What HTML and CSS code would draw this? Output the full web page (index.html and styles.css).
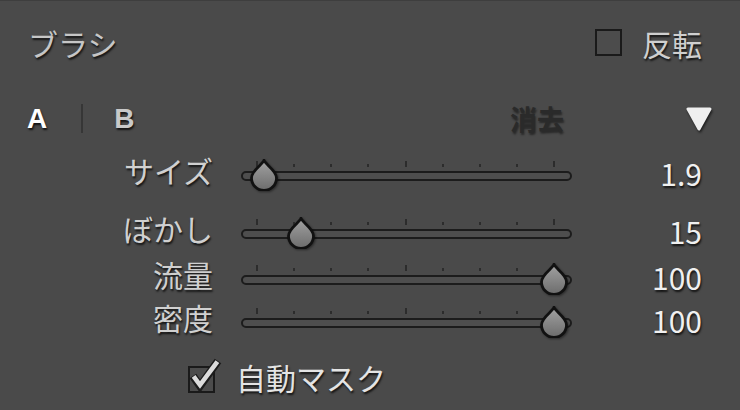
FILE: index.html
```html
<!DOCTYPE html>
<html lang="ja">
<head>
<meta charset="utf-8">
<title>ブラシ</title>
<link rel="stylesheet" href="styles.css">
</head>
<body>
<div class="panel">
  <div class="header">
    <span class="title">ブラシ</span>
    <div class="invert">
      <span class="box"></span>
      <span class="invert-text">反転</span>
    </div>
  </div>

  <div class="tabs">
    <span class="tab tab-active">A</span>
    <span class="sep"></span>
    <span class="tab">B</span>
    <span class="erase">消去</span>
    <svg class="tri" width="28" height="28" viewBox="0 0 28 28">
      <polygon points="3,4 25,4 14,24" fill="#efefef" stroke="#efefef" stroke-width="3" stroke-linejoin="round"/>
    </svg>
  </div>

  <div class="sliders">
    <span class="label">サイズ</span>
    <div class="slider">
      <div class="ticks"><i class="major"></i><i></i><i></i><i></i><i class="major"></i><i></i><i></i><i></i><i class="major"></i></div>
      <div class="track"></div>
      <svg class="thumb" style="--pos:0.022" width="32" height="32" viewBox="0 0 32 32"><use href="#drop"/></svg>
    </div>
    <span class="value">1.9</span>

    <span class="label">ぼかし</span>
    <div class="slider">
      <div class="ticks"><i class="major"></i><i></i><i></i><i></i><i class="major"></i><i></i><i></i><i></i><i class="major"></i></div>
      <div class="track"></div>
      <svg class="thumb" style="--pos:0.148" width="32" height="32" viewBox="0 0 32 32"><use href="#drop"/></svg>
    </div>
    <span class="value">15</span>

    <span class="label">流量</span>
    <div class="slider">
      <div class="ticks"><i class="major"></i><i></i><i></i><i></i><i class="major"></i><i></i><i></i><i></i><i class="major"></i></div>
      <div class="track"></div>
      <svg class="thumb" style="--pos:1" width="32" height="32" viewBox="0 0 32 32"><use href="#drop"/></svg>
    </div>
    <span class="value">100</span>

    <span class="label">密度</span>
    <div class="slider">
      <div class="ticks"><i class="major"></i><i></i><i></i><i></i><i class="major"></i><i></i><i></i><i></i><i class="major"></i></div>
      <div class="track"></div>
      <svg class="thumb" style="--pos:1" width="32" height="32" viewBox="0 0 32 32"><use href="#drop"/></svg>
    </div>
    <span class="value">100</span>
  </div>

  <div class="automask">
    <span class="box box-checked">
      <svg class="check" width="34" height="36" viewBox="0 0 34 36">
        <polyline points="3,20 10,30 28,5" fill="none" stroke="#1c1c1c" stroke-width="8" stroke-linejoin="miter"/>
        <polyline points="3.6,20.4 10,29 27.4,5.6" fill="none" stroke="#dcdcdc" stroke-width="4.6" stroke-linejoin="miter"/>
      </svg>
    </span>
    <span class="automask-text">自動マスク</span>
  </div>
</div>

<svg width="0" height="0" class="defs">
  <defs>
    <linearGradient id="dropfill" x1="0" y1="0" x2="0" y2="1">
      <stop offset="0" stop-color="#a2a2a2"/>
      <stop offset="1" stop-color="#6c6c6c"/>
    </linearGradient>
    <symbol id="drop" viewBox="0 0 32 32">
      <path d="M16 1.2 C17.5 6 28.5 11 28.5 19 A12.5 12.5 0 0 1 3.5 19 C3.5 11 14.5 6 16 1.2 Z" fill="url(#dropfill)" stroke="#111" stroke-width="2.8" stroke-linejoin="round"/>
    </symbol>
  </defs>
</svg>
</body>
</html>
```

FILE: styles.css
```css
html, body {
  margin: 0;
  padding: 0;
  background: #4a4a4a;
}

.panel {
  width: 740px;
  height: 410px;
  box-sizing: border-box;
  background: #4a4a4a;
  border-top: 1px solid #3e3e3e;
  padding-top: 27px;
  font-family: "Noto Sans CJK JP", "Noto Sans", sans-serif;
  color: #d2d2d2;
  overflow: hidden;
}

.header {
  display: flex;
  align-items: center;
  justify-content: space-between;
  box-sizing: border-box;
  height: 32px;
  padding: 0 38px 3px 28px;
}

.title {
  font-size: 30px;
  line-height: 1;
  color: #c6c6c6;
  text-shadow: 1px 2px 2px rgba(0, 0, 0, 0.75);
}

.invert {
  display: flex;
  align-items: center;
  gap: 20px;
}

.box {
  position: relative;
  display: block;
  width: 27px;
  height: 27px;
  box-sizing: border-box;
  border: 2px solid #1a1a1a;
  background: #4c4c4c;
}

.invert-text {
  font-size: 30px;
  line-height: 1;
  color: #cfcfcf;
  text-shadow: 1px 2px 2px rgba(0, 0, 0, 0.75);
}

.tabs {
  display: flex;
  align-items: center;
  box-sizing: border-box;
  height: 32px;
  margin-top: 45px;
  padding: 0 27px 5px 27px;
}

.tab {
  font-family: "Liberation Sans", "Noto Sans", sans-serif;
  font-weight: bold;
  font-size: 28px;
  line-height: 1;
  color: #c9c9c9;
  text-shadow: 1px 2px 2px rgba(0, 0, 0, 0.75);
}

.tab-active {
  color: #ffffff;
}

.sep {
  display: block;
  width: 2px;
  height: 29px;
  margin: 0 31px 0 34px;
  background: #363636;
}

.erase {
  margin-left: auto;
  font-size: 27px;
  font-weight: bold;
  line-height: 1;
  color: #2a2a2a;
  text-shadow: 1px 2px 2px rgba(0, 0, 0, 0.45);
}

.tri {
  display: block;
  margin-left: 121px;
  filter: drop-shadow(1px 2px 1px rgba(0, 0, 0, 0.6));
}

.sliders {
  display: grid;
  grid-template-columns: 213px 331px 1fr;
  grid-template-rows: 58px 46px 43px 40px;
  column-gap: 28px;
  margin-top: 19px;
  padding-right: 38px;
}

.label {
  align-self: start;
  height: 40px;
  display: flex;
  align-items: center;
  justify-content: flex-end;
  padding-bottom: 13px;
  box-sizing: border-box;
  font-size: 30px;
  line-height: 1;
  color: #d0d0d0;
  text-shadow: 1px 2px 2px rgba(0, 0, 0, 0.75);
}

.value {
  align-self: start;
  height: 40px;
  display: flex;
  align-items: center;
  justify-content: flex-end;
  padding-bottom: 7px;
  box-sizing: border-box;
  font-size: 30px;
  line-height: 1;
  color: #f0f0f0;
  text-shadow: 1px 2px 2px rgba(0, 0, 0, 0.75);
}

.slider {
  position: relative;
  align-self: start;
  height: 40px;
  display: flex;
  flex-direction: column;
}

.ticks {
  display: flex;
  justify-content: space-between;
  align-items: flex-end;
  height: 6px;
  margin-top: 5px;
  padding: 0 17px 0 15px;
}

.ticks i {
  display: block;
  width: 2px;
  height: 3px;
  background: #2c2c2c;
}

.ticks i.major {
  height: 6px;
}

.track {
  height: 10px;
  margin-top: 4px;
  box-sizing: border-box;
  border: 2px solid #1c1c1c;
  border-radius: 5px;
  background: #4e4e4e;
}

.thumb {
  position: absolute;
  top: 3px;
  left: calc(var(--pos) * 297px);
  filter: drop-shadow(1px 1px 1px rgba(0, 0, 0, 0.45));
}

.automask {
  display: flex;
  align-items: center;
  height: 32px;
  margin-top: 18px;
  padding-left: 188px;
  gap: 21px;
}

.box-checked {
  margin-top: 5px;
}

.check {
  position: absolute;
  left: 0;
  top: -12px;
}

.automask-text {
  font-size: 30px;
  line-height: 1;
  color: #e4e4e4;
  text-shadow: 1px 2px 2px rgba(0, 0, 0, 0.75);
}

.defs {
  position: absolute;
  width: 0;
  height: 0;
}
```
